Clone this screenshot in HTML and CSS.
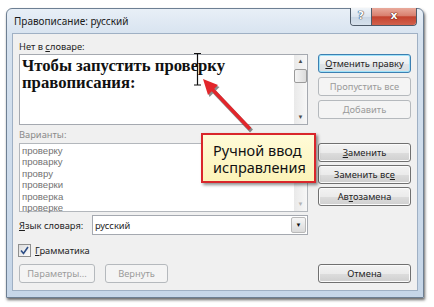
FILE: index.html
```html
<!DOCTYPE html>
<html lang="ru">
<head>
    <meta charset="UTF-8">
    <meta name="viewport" content="width=device-width, initial-scale=1.0">
    <title>Правописание: русский</title>
    <link rel="stylesheet" href="styles.css">
</head>
<body>
    <div class="window">
        <div class="titlebar">
            <span class="title">Правописание: русский</span>
            <div class="caption-buttons">
                <span class="cap-btn help">?</span>
                <span class="cap-btn close">x</span>
            </div>
        </div>
        <div class="client">
            <div class="left">
                <div class="label">Нет в <u>с</u>ловаре:</div>
                <div class="textbox">
                    <div class="text">Чтобы запустить проверку<br>правописания:</div>
                    <div class="scrollbar">
                        <span class="sb-btn">&#9650;</span>
                        <span class="sb-thumb"></span>
                        <span class="sb-space"></span>
                        <span class="sb-btn">&#9660;</span>
                    </div>
                </div>
                <div class="label disabled">Варианты:</div>
                <div class="list">
                    <div class="items">
                        <span>проверку</span>
                        <span>проварку</span>
                        <span>провру</span>
                        <span>проверки</span>
                        <span>проверка</span>
                        <span>проверке</span>
                    </div>
                    <div class="scrollbar off">
                        <span class="sb-btn"></span>
                        <span class="sb-space"></span>
                        <span class="sb-btn">&#9660;</span>
                    </div>
                </div>
                <div class="lang-row">
                    <span class="lang-label"><u>Я</u>зык словаря:</span>
                    <div class="combo">
                        <span class="combo-value">русский</span>
                        <span class="combo-drop">&#9660;</span>
                    </div>
                </div>
                <div class="check-row">
                    <span class="checkbox">
                        <svg width="9" height="9" viewBox="0 0 9 9"><path d="M1 4.5 L3.5 7.5 L8 1" fill="none" stroke="#2d4e86" stroke-width="1.6"/></svg>
                    </span>
                    <span><u>Г</u>рамматика</span>
                </div>
                <div class="bottom-buttons">
                    <button class="btn disabled wide">Параметры...</button>
                    <button class="btn disabled narrow">Вернуть</button>
                </div>
            </div>
            <div class="right">
                <button class="btn focused"><u>О</u>тменить правку</button>
                <button class="btn disabled gap-sm">Пропустить все</button>
                <button class="btn disabled gap-sm">Добавить</button>
                <button class="btn gap-lg"><u>З</u>аменить</button>
                <button class="btn gap-xs">Заменить вс<u>е</u></button>
                <button class="btn gap-xs">Ав<u>т</u>озамена</button>
                <button class="btn cancel">Отмена</button>
            </div>
        </div>
    </div>

    <!-- mouse cursor over the text -->
    <svg class="ibeam" width="12" height="36" viewBox="0 0 12 36">
        <path d="M6.5 1 V33 M3 1.5 H10 M3 33 H10" stroke="#111" stroke-width="1.2" fill="none"/>
    </svg>

    <!-- annotation -->
    <svg class="arrow" width="434" height="307" viewBox="0 0 434 307">
        <g opacity="0.45" transform="translate(1.5 2)">
            <line x1="250" y1="129" x2="212" y2="89" stroke="#000" stroke-width="4"/>
            <polygon points="203,79 218,85 208,95" fill="#000"/>
        </g>
        <line x1="250" y1="129" x2="212" y2="89" stroke="#e2262b" stroke-width="3.5"/>
        <polygon points="203,79 218,85 208,95" fill="#e2262b"/>
    </svg>
    <div class="callout">Ручной ввод<br>исправления</div>
</body>
</html>
```

FILE: styles.css
```css
html, body {
    margin: 0;
}
body {
    width: 434px;
    height: 307px;
    overflow: hidden;
    background: #fff;
    position: relative;
    font-family: "Noto Sans", "Liberation Sans", sans-serif;
    font-size: 9.3px;
    color: #1e1e1e;
}
u {
    text-decoration-thickness: 1px;
    text-underline-offset: 1px;
}

/* window frame */
.window {
    box-sizing: border-box;
    width: 418px;
    height: 290px;
    margin: 8px 0 0 6px;
    border: 1px solid #6d7f93;
    border-radius: 6px 6px 0 0;
    background: linear-gradient(#e8eff7 0, #d6e2ef 28px, #c6d6e8 100%);
    box-shadow: 1px 2px 3px rgba(0, 0, 0, 0.6);
    display: flex;
    flex-direction: column;
}
.titlebar {
    height: 24px;
    display: flex;
    justify-content: space-between;
    align-items: flex-start;
}
.title {
    padding: 5px 0 0 7px;
    font-size: 10px;
    line-height: 14px;
    color: #1a1a1a;
}
.caption-buttons {
    display: flex;
    margin: -1px 6px 0 0;
    border: 1px solid #4f5b69;
    border-top: none;
    border-radius: 0 0 4px 4px;
    overflow: hidden;
}
.cap-btn {
    height: 17px;
    line-height: 16px;
    text-align: center;
    font-family: "DejaVu Sans", sans-serif;
    font-weight: bold;
    color: #fff;
}
.help {
    width: 20px;
    font-size: 11px;
    border-right: 1px solid #4f5b69;
    background: linear-gradient(#f1f5f9 0, #dce5ef 50%, #c9d6e4 51%, #d7e1ec 100%);
    text-shadow: 0 0 1px #2f4257, 0 0 1px #2f4257, 0 0 1px #2f4257;
}
.close {
    width: 44px;
    font-size: 11px;
    background: linear-gradient(#e9aa9c 0, #d9806f 45%, #c4432f 52%, #d2614d 100%);
    text-shadow: 0 0 1px #5a1710, 0 0 1px #5a1710, 0 0 1px #5a1710;
}

/* dialog body */
.client {
    box-sizing: border-box;
    height: 258px;
    margin: 0 5px;
    padding: 6px 6px 0 6px;
    border: 1px solid #9fb0c4;
    background: #f0f0f0;
    display: flex;
}
.left {
    width: 289px;
    display: flex;
    flex-direction: column;
}
.label {
    line-height: 14px;
    height: 14px;
}
.label.disabled {
    margin-top: 3px;
    color: #8a8a8a;
}
.textbox {
    box-sizing: border-box;
    height: 71px;
    border: 1px solid #a5a9b0;
    background: #fff;
    display: flex;
}
.text {
    flex: 1;
    padding: 2px 0 0 2px;
    font-family: "Liberation Serif", "Times New Roman", serif;
    font-weight: bold;
    font-size: 16.7px;
    line-height: 17px;
    color: #111;
}
.scrollbar {
    width: 13px;
    display: flex;
    flex-direction: column;
    background: linear-gradient(90deg, #e9e9e9, #f7f7f7);
}
.sb-btn {
    height: 13px;
    font-size: 6px;
    line-height: 13px;
    text-align: center;
    color: #4a4a4a;
}
.sb-thumb {
    box-sizing: border-box;
    height: 14px;
    margin: 1px 0 0 0;
    border: 1px solid #9b9b9b;
    border-radius: 2px;
    background: linear-gradient(90deg, #f4f4f4, #dcdcdc);
}
.sb-space {
    flex: 1;
}
.scrollbar.off .sb-btn {
    color: #b4b4b4;
}
.list {
    box-sizing: border-box;
    height: 69px;
    margin-top: 1px;
    border: 1px solid #b3b7bc;
    background: #fff;
    display: flex;
}
.items {
    flex: 1;
    padding: 1px 0 0 2px;
    display: flex;
    flex-direction: column;
    align-items: flex-start;
    font-family: "Liberation Sans", Arial, sans-serif;
    font-size: 9.6px;
    color: #737373;
    line-height: 11.4px;
}
.lang-row {
    margin-top: 3px;
    height: 20px;
    display: flex;
    align-items: center;
}
.lang-label {
    width: 73px;
}
.combo {
    box-sizing: border-box;
    flex: 1;
    height: 20px;
    border: 1px solid #a5a9b0;
    background: #fff;
    display: flex;
    align-items: center;
    justify-content: space-between;
}
.combo-value {
    padding-left: 2px;
}
.combo-drop {
    box-sizing: border-box;
    width: 15px;
    height: 16px;
    margin-right: 1px;
    border: 1px solid #b9b9b9;
    border-radius: 2px;
    background: linear-gradient(#f6f6f6, #dadada);
    font-size: 6px;
    line-height: 14px;
    text-align: center;
    color: #111;
}
.check-row {
    margin-top: 8px;
    height: 14px;
    display: flex;
    align-items: center;
    gap: 4px;
    margin-left: -1px;
}
.checkbox {
    box-sizing: border-box;
    width: 13px;
    height: 13px;
    border: 1px solid #8e8f8f;
    background: linear-gradient(135deg, #dcdcdc, #fdfdfd);
    display: flex;
    align-items: center;
    justify-content: center;
}
.bottom-buttons {
    margin-top: 7px;
    display: flex;
    gap: 10px;
}

/* push buttons */
.btn {
    box-sizing: border-box;
    height: 19px;
    padding: 0;
    border: 1px solid #707070;
    border-radius: 3px;
    background: linear-gradient(#f3f3f3 0, #ebebeb 50%, #dddddd 51%, #cfcfcf 100%);
    box-shadow: inset 0 0 0 1px #fbfbfb;
    font: inherit;
    color: #1e1e1e;
    line-height: 16px;
    text-align: center;
}
.btn.disabled {
    border-color: #b5b9bd;
    background: #f4f4f4;
    box-shadow: none;
    color: #9a9a9a;
}
.btn.focused {
    border-color: #3c7fb1;
    box-shadow: inset 0 0 0 1px #9fe2f9;
    background: linear-gradient(#f6f8fa 0, #eceff1 50%, #e1e5e8 51%, #d8dde1 100%);
}
.btn.wide {
    width: 76px;
}
.btn.narrow {
    width: 63px;
}
.right {
    width: 93px;
    margin-left: 10px;
    padding-top: 14px;
    display: flex;
    flex-direction: column;
}
.gap-sm {
    margin-top: 4px;
}
.gap-lg {
    margin-top: 24px;
}
.gap-xs {
    margin-top: 3px;
}
.cancel {
    margin-top: 58px;
}

/* overlays */
.ibeam {
    position: absolute;
    left: 191px;
    top: 52px;
}
.arrow {
    position: absolute;
    left: 0;
    top: 0;
}
.callout {
    position: absolute;
    left: 201px;
    top: 133px;
    box-sizing: border-box;
    width: 115px;
    height: 50px;
    padding: 7px 0 0 10px;
    border: 2px solid #d9262b;
    background: linear-gradient(#fffbd8, #fcf3b8);
    box-shadow: 2px 2px 3px rgba(0, 0, 0, 0.45);
    font-size: 14.5px;
    line-height: 17px;
    color: #111;
}
```
